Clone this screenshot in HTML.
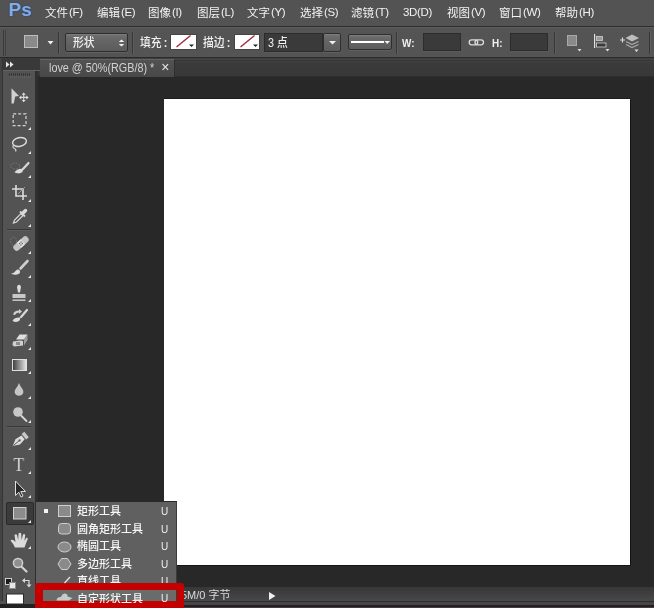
<!DOCTYPE html>
<html lang="zh-CN">
<head>
<meta charset="utf-8">
<title>Photoshop</title>
<style>
html,body{margin:0;padding:0;}
body{width:654px;height:608px;overflow:hidden;background:#282828;position:relative;
 font-family:"Liberation Sans","Noto Sans CJK SC",sans-serif;font-size:12px;color:#e4e4e4;}
div,span{position:absolute;box-sizing:border-box;}
#menubar,#optbar,#tabbar,#status,#flyout,#ttool{will-change:transform;}
svg{position:absolute;overflow:visible;left:0;top:0;filter:blur(0.35px);z-index:6;}
/* menu bar */
#menubar{left:0;top:0;width:654px;height:27px;background:#535353;border-bottom:1px solid #302e2c;}
#menubar span{top:3.5px;height:18px;line-height:18px;white-space:nowrap;font-size:11.5px;color:#f2f2f2;}
#menubar b{font-weight:normal;font-size:11.5px;letter-spacing:-0.35px;position:relative;top:-1px;margin-left:1px;}
#menubar #ps{left:8px;top:-1px;font-weight:bold;font-size:19px;color:#86abe3;line-height:22px;height:22px;letter-spacing:0px;text-shadow:0 0 1.5px #23458c,0 0 1px #23458c;left:8.5px;top:-1.5px;}
/* option bar */
#optbar{left:0;top:27px;width:654px;height:31px;background:#545454;border-top:1px solid #5c5c5c;border-bottom:1px solid #2b2b2b;}
#optbar span.t{top:5.5px;height:18px;line-height:18px;white-space:nowrap;font-size:12px;color:#f0f0f0;font-weight:500;transform:scaleX(0.9);transform-origin:0 50%;}
#optbar span.t b{font-weight:bold;margin-left:2.5px;}
.sep{top:4px;width:2px;height:22px;border-left:1px solid #363636;border-right:1px solid #5e5e5e;}
.dd{background:linear-gradient(#727272,#686868 25%,#5b5b5b);border:1px solid #2e2e2e;border-radius:2px;box-shadow:0 1px 0 #606060, inset 0 1px 0 #7c7c7c;}
.inp{background:#3a3a3a;border:1px solid #2c2c2c;box-shadow:0 1px 0 #5a5a5a;}
.sw{background:#fdfdfd;box-shadow:0 0 0 1px #444;}
/* tab bar */
#tabbar{left:38px;top:58px;width:616px;height:18.5px;background:linear-gradient(#323232 0,#444 0.7px,#454545 2px,#363636 2.5px,#414141 3.5px,#3b3b3b 4.5px,#383838 17.5px,#2e2e2e 18.5px);}
#tab{left:2px;top:1px;width:135px;height:17.5px;background:linear-gradient(#525252,#484848);border-top:1px solid #626262;border-right:1px solid #2e2e2e;}
#tab span{left:9px;top:0px;line-height:17px;font-size:12px;white-space:nowrap;color:#d2d2d2;transform:scaleX(0.9);transform-origin:0 50%;}
#tab #tclose{left:121.2px;top:-1.5px;font-size:14px;line-height:17px;transform:none;color:#e6e6e6;}
/* tools */
#tools{left:0;top:58px;width:38px;height:550px;background:#535353;border-left:2px solid #434343;border-right:3px solid #2f2f2f;box-shadow:inset 1px 0 0 #353535;}
#toolhead{left:1px;top:0px;width:37px;height:11.5px;background:#393939;z-index:3;box-shadow:0 1px 0 #616161;}
.tsep{left:5px;width:24px;height:2px;border-top:1px solid #383838;border-bottom:1px solid #5c5c5c;}
#selbtn{left:4px;top:444px;width:28px;height:23px;background:#3b3b3b;border:1px solid #2a2a2a;border-radius:2px;}
/* doc */
#doc{left:164px;top:99px;width:465.5px;height:466px;background:#fff;box-shadow:1px 1px 0 #141414, 0 -1px 0 #1c1c1c;}
#status{left:38px;top:587px;width:616px;height:14px;background:linear-gradient(#373737,#484848);}
#status span{left:143px;top:0px;line-height:17px;font-size:11px;white-space:nowrap;color:#dcdcdc;}
#bottom{left:0;top:601px;width:654px;height:7px;background:linear-gradient(#2c2c2c 0,#2c2c2c 1.5px,#48454a 1.5px,#48454a 4.5px,#241e21 4.5px,#241e21 6px,#463c40 6px);}
#bottoml{left:0;top:601px;width:36px;height:7px;background:linear-gradient(#535353 0,#535353 3px,#222 3.5px);}
/* flyout */
#flyout{left:36px;top:501px;width:141px;height:107px;background:#606060;border:1px solid #3a3a3a;border-top-color:#2a2a2a;border-left:none;overflow:hidden;}
#flyout2 span.u{left:123px;}
#flyout2{left:38px;top:589.7px;width:139px;height:12.6px;overflow:hidden;will-change:transform;}
#flyout span,#flyout2 span{white-space:nowrap;font-size:11px;line-height:17px;height:17px;color:#f6f6f6;font-weight:500;}
#flyout span.n{left:41px;}
#flyout2 span.n{left:39px;}
#flyout span.u{left:125px;}
#flyout span.u,#flyout2 span.u{font-size:10px;font-weight:normal;color:#efefef;}
#hl{left:0;top:86px;width:141px;height:20px;background:#6a6c6b;}
#red{left:34.7px;top:582.5px;width:148.9px;height:30.5px;border-style:solid;border-color:#c40000;border-width:7.7px 7.5px 12px 8px;border-radius:3px;}
</style>
</head>
<body>
<div id="menubar">
 <span id="ps">Ps</span>
 <span style="left:45px">文件<b>(F)</b></span>
 <span style="left:97px">编辑<b>(E)</b></span>
 <span style="left:148px">图像<b>(I)</b></span>
 <span style="left:197px">图层<b>(L)</b></span>
 <span style="left:247px">文字<b>(Y)</b></span>
 <span style="left:300px">选择<b>(S)</b></span>
 <span style="left:351px">滤镜<b>(T)</b></span>
 <span style="left:402px"><b>3D(D)</b></span>
 <span style="left:447px">视图<b>(V)</b></span>
 <span style="left:499px">窗口<b>(W)</b></span>
 <span style="left:555px">帮助<b>(H)</b></span>
</div>
<div id="optbar">
 <div class="sep" style="left:58px"></div>
 <div class="dd" style="left:65px;top:4.5px;width:63px;height:19px"></div>
 <span class="t" style="left:72.5px">形状</span>
 <div class="sep" style="left:132px"></div>
 <span class="t" style="left:139.5px">填充<b>:</b></span>
 <div class="sw" style="left:171px;top:6.500px;width:24.500px;height:14.500px"></div>
 <span class="t" style="left:202.5px">描边<b>:</b></span>
 <div class="sw" style="left:235px;top:6.500px;width:24px;height:14.500px"></div>
 <div class="inp" style="left:264px;top:5px;width:59px;height:19px"></div>
 <span class="t" style="left:267.5px">3 点</span>
 <div class="dd" style="left:323px;top:5px;width:18px;height:19px"></div>
 <div class="dd" style="left:348px;top:6px;width:44px;height:16px"></div>
 <div class="sep" style="left:396px"></div>
 <span class="t" style="left:402px;font-weight:bold;font-size:11px">W:</span>
 <div class="inp" style="left:423px;top:5px;width:38px;height:18px"></div>
 <span class="t" style="left:492px;font-weight:bold;font-size:11px">H:</span>
 <div class="inp" style="left:510px;top:5px;width:38px;height:18px"></div>
 <div class="sep" style="left:554px"></div>
 <div class="sep" style="left:649px"></div>
</div>
<span id="ttool" style="left:13px;top:455px;font-family:'Liberation Serif',serif;font-size:19px;line-height:19px;color:#d4d4d4;z-index:5;transform:scaleX(0.9);">T</span>
<div id="tabbar"><div id="tab"><span>love @ 50%(RGB/8) *</span><span id="tclose">×</span></div></div>
<div id="tools">
 <div id="toolhead"></div>
 <div class="tsep" style="top:171px"></div>
 <div class="tsep" style="top:368px"></div>
 <div id="selbtn"></div>
</div>
<div id="doc"></div>
<div id="status"><span>5M/0 字节</span></div>
<div id="bottom"></div><div id="bottoml"></div>
<div id="flyout">
 <span class="n" style="top:1px">矩形工具</span><span class="u" style="top:1px">U</span>
 <span class="n" style="top:18.5px">圆角矩形工具</span><span class="u" style="top:18.5px">U</span>
 <span class="n" style="top:36px">椭圆工具</span><span class="u" style="top:36px">U</span>
 <span class="n" style="top:53.5px">多边形工具</span><span class="u" style="top:53.5px">U</span>
 <span class="n" style="top:71px">直线工具</span><span class="u" style="top:71px">U</span>
 <div id="hl"></div>
</div>
<div id="red"></div>
<div id="flyout2"><span class="n" style="top:0.8px">自定形状工具</span><span class="u" style="top:0.2px">U</span></div>
<svg id="icons" width="654" height="608" viewBox="0 0 654 608">
<!-- ICONS -->
<defs>
 <linearGradient id="gr" x1="0" y1="0" x2="1" y2="0"><stop offset="0" stop-color="#3a3a3a"/><stop offset="1" stop-color="#e8e8e8"/></linearGradient>
</defs>
<!-- option bar -->
<g fill="#3a3a3a"><rect x="3" y="30" width="1" height="26" fill="#3a3a3a"/><rect x="5" y="30" width="1" height="26" fill="#404040"/></g>
<rect x="24.5" y="35.5" width="13" height="12" fill="#8a8a8a" stroke="#bdbdbd"/>
<path d="M47.5 41 L53.5 41 L50.5 44.5 Z" fill="#f0f0f0"/>
<path d="M118.8 42 L124.2 42 L121.5 39.5 Z M118.8 44 L124.2 44 L121.5 46.5 Z" fill="#f4f4f4"/>
<line x1="176.5" y1="47" x2="190.5" y2="35.5" stroke="#9a2c3c" stroke-width="1.4"/>
<path d="M189 44.500 L194 44.500 L191.5 47 Z" fill="#222"/>
<line x1="240.5" y1="47" x2="254.5" y2="35.5" stroke="#9a2c3c" stroke-width="1.4"/>
<path d="M253 44.500 L258 44.500 L255.5 47 Z" fill="#222"/>
<path d="M329 41 L336 41 L332.5 44.5 Z" fill="#f0f0f0"/>
<rect x="351" y="41" width="33" height="2" fill="#fff"/>
<path d="M384.5 41 L390 41 L387.2 44 Z" fill="#f0f0f0"/>
<g fill="none" stroke="#dcdcdc" stroke-width="1.3"><rect x="469.2" y="39.8" width="8.5" height="5" rx="2.5"/><rect x="475" y="39.8" width="8.5" height="5" rx="2.5"/></g>
<rect x="567.5" y="35.5" width="9" height="10" fill="#8a8a8a" stroke="#a8a8a8"/>
<path d="M577.5 49 L581.5 49 L579.5 51.5 Z" fill="#e0e0e0"/>
<g><rect x="594" y="34" width="1.2" height="14" fill="#e0e0e0"/><rect x="596.5" y="36.5" width="6" height="4" fill="#9a9a9a" stroke="#d0d0d0" stroke-width="0.8"/><rect x="596.5" y="43" width="9.5" height="4" fill="#3a3a3a" stroke="#d0d0d0" stroke-width="0.8"/><path d="M605.5 49 L609.5 49 L607.5 51.5 Z" fill="#e0e0e0"/></g>
<g><path d="M620 40 h5 M622.5 37.5 v5" stroke="#d8d8d8" stroke-width="1.2"/><path d="M632 34.5 L639 38 L632 41.500 L625.500 38 Z" fill="#bdbdbd"/><path d="M626 41.500 L632 44.500 L638.500 41.500 M626 44.500 L632 47.500 L638.500 44.500" fill="none" stroke="#a8a8a8" stroke-width="1.3"/><path d="M634.5 49.500 L638.5 49.500 L636.500 52 Z" fill="#e0e0e0"/></g>
<!-- tab close -->
<!-- toolbar header -->
<path d="M6 61.500 L9.500 64.500 L6 67.500 Z M10 61.500 L13.500 64.500 L10 67.500 Z" fill="#e8e8e8"/>
<line x1="9" y1="74.500" x2="31" y2="74.500" stroke="#333" stroke-width="2.500" stroke-dasharray="1 1"/>
<line x1="10" y1="77" x2="32" y2="77" stroke="#6a6a6a" stroke-width="1" stroke-dasharray="1 1"/>
<!-- corner triangles -->
<g>
<path d="M31 127 v3 h-3 Z" fill="#e8e8e8"/><path d="M31 151 v3 h-3 Z" fill="#e8e8e8"/><path d="M31 175 v3 h-3 Z" fill="#e8e8e8"/><path d="M31 199 v3 h-3 Z" fill="#e8e8e8"/><path d="M31 224 v3 h-3 Z" fill="#e8e8e8"/>
<path d="M31 251 v3 h-3 Z" fill="#e8e8e8"/><path d="M31 275 v3 h-3 Z" fill="#e8e8e8"/><path d="M31 299 v3 h-3 Z" fill="#e8e8e8"/><path d="M31 323 v3 h-3 Z" fill="#e8e8e8"/>
<path d="M31 347 v3 h-3 Z" fill="#e8e8e8"/><path d="M31 371 v3 h-3 Z" fill="#e8e8e8"/><path d="M31 396 v3 h-3 Z" fill="#e8e8e8"/><path d="M31 420 v3 h-3 Z" fill="#e8e8e8"/>
<path d="M31 447 v3 h-3 Z" fill="#e8e8e8"/><path d="M31 471 v3 h-3 Z" fill="#e8e8e8"/><path d="M31 495 v3 h-3 Z" fill="#e8e8e8"/><path d="M31 520 v3 h-3 Z" fill="#e8e8e8"/><path d="M31 546 v3 h-3 Z" fill="#e8e8e8"/>
</g>
<!-- move tool -->
<path d="M11.500 88.300 L19 96 L15.200 96.500 L13.800 103.500 L11.500 103.500 Z" fill="#d0d0d0"/>
<path d="M20.500 97.400 h7 M23.700 94 v7" stroke="#d8d8d8" stroke-width="1.100" fill="none"/>
<path d="M23.700 92.500 l-2 2.300 h4 Z M23.700 102.300 l-2 -2.300 h4 Z M19 97.400 l2.300 -2 v4 Z M28.600 97.400 l-2.300 -2 v4 Z" fill="#e0e0e0"/>
<!-- marquee -->
<rect x="13.200" y="113.800" width="12.800" height="11.800" fill="none" stroke="#d4d4d4" stroke-width="1.2" stroke-dasharray="3 2"/>
<!-- lasso -->
<ellipse cx="19.500" cy="142" rx="7" ry="4.300" fill="none" stroke="#dcdcdc" stroke-width="1.400" transform="rotate(-12 19.500 142)"/>
<path d="M13.500 145 q-1.500 2.500 1 3.500 q2 1 1 3" fill="none" stroke="#cfcfcf" stroke-width="1.300"/>
<!-- quick select -->
<path d="M28.500 163 L23 169" stroke="#d8d8d8" stroke-width="2.200" stroke-linecap="round"/>
<path d="M14.500 172.500 q3 -4.500 8.500 -3.500 q0.500 4 -4.500 4.500 Z" fill="#dcdcdc"/>
<ellipse cx="15" cy="166" rx="4.500" ry="3" fill="none" stroke="#777" stroke-width="1" stroke-dasharray="1.500 1.500"/>
<!-- crop -->
<path d="M16 185 v11 h11 M12 189 h11 v11" fill="none" stroke="#dcdcdc" stroke-width="1.600"/>
<path d="M18 194 L25 187" stroke="#9a9a9a" stroke-width="1"/>
<!-- eyedropper -->
<path d="M13.500 223 L14.500 220 L21 213.500 L23 215.500 L16.500 222 Z" fill="none" stroke="#d8d8d8" stroke-width="1.200"/>
<path d="M20 211.500 L25 216.500" stroke="#d0d0d0" stroke-width="2"/>
<path d="M22.500 213.500 L25.500 210.500" stroke="#d8d8d8" stroke-width="3.500" stroke-linecap="round"/>
<!-- heal (bandage) -->
<g transform="rotate(-42 21 243.500)"><rect x="12" y="240.200" width="18" height="6.600" rx="3" fill="#c4c4c4"/><rect x="18.500" y="240.200" width="5" height="6.600" fill="#e6e6e6"/><circle cx="20" cy="242.500" r="0.700" fill="#555"/><circle cx="22" cy="244.500" r="0.700" fill="#555"/><circle cx="22" cy="242.500" r="0.700" fill="#555"/><circle cx="20" cy="244.500" r="0.700" fill="#555"/></g>
<ellipse cx="13.500" cy="241" rx="3" ry="4" fill="none" stroke="#7a7a7a" stroke-width="1" stroke-dasharray="1.500 1.500"/>
<!-- brush -->
<path d="M27.500 261 L20.500 268.500" stroke="#cfcfcf" stroke-width="2.600" stroke-linecap="round"/>
<path d="M11 273.500 q3.500 -0.500 5 -3 q2 -2 4 0.500 q0.500 3 -3 3.500 q-3 0.800 -6 -1 Z" fill="#dcdcdc"/>
<!-- stamp -->
<path d="M17.500 285.500 q1.500 -1.500 3 0 q1 1.500 0 4 l-0.500 3 h-2 l-0.500 -3 q-1 -2.500 0 -4 Z" fill="#dcdcdc"/>
<rect x="12.500" y="294" width="13" height="4" fill="#c8c8c8"/>
<rect x="12.500" y="299.500" width="13" height="1.300" fill="#dcdcdc"/>
<!-- history brush -->
<path d="M27 310 L21 317" stroke="#d8d8d8" stroke-width="2.200" stroke-linecap="round"/>
<path d="M12.500 320.500 q2.500 -3.500 7.500 -3 q1 3.500 -3.500 4.500 q-2.500 0.300 -4 -1.500 Z" fill="#dcdcdc"/>
<path d="M13 314.500 q1 -4 6 -4 l0 -1.500 l3 2.500 l-3 2.500 l0 -1.500 q-3 0 -4 2.500 Z" fill="#cfcfcf"/>
<!-- eraser -->
<path d="M19.500 334.500 L27.500 334.500 L24 339.500 L16 339.500 Z" fill="#e0e0e0"/>
<path d="M24 339.500 L27.500 334.500 L27.500 340 L24 345.500 Z" fill="#9c9c9c"/>
<path d="M13 341.500 L20 340.500 L23 341 L23 345.500 L14 346.500 L12.500 345 Z" fill="#d0d0d0"/>
<rect x="16" y="342" width="4" height="3" fill="#8c8c8c"/>
<!-- gradient -->
<rect x="12.500" y="359.500" width="14" height="11" fill="url(#gr)" stroke="#e0e0e0" stroke-width="1"/>
<!-- blur drop -->
<path d="M19 383 q1 3 3.500 6 q2 3.500 -0.500 5.800 q-3 2 -6 0 q-2.500 -2.300 -0.500 -5.800 q2.500 -3 3.500 -6 Z" fill="#c6c6c6"/>
<!-- dodge -->
<circle cx="18" cy="412" r="4.800" fill="#c8c8c8"/>
<path d="M21.500 416 L26.500 421" stroke="#d8d8d8" stroke-width="1.800" stroke-linecap="round"/>
<!-- pen -->
<g transform="rotate(-40 20 440)"><path d="M10.500 440 L17 436.500 L24 437.500 L24 442.500 L17 443.500 Z" fill="#dcdcdc"/><rect x="25" y="436.500" width="3.600" height="7" fill="#c8c8c8"/><path d="M11.500 440 H19" stroke="#555" stroke-width="0.900"/><circle cx="19.500" cy="440" r="1.100" fill="#555"/></g>
<!-- path select arrow -->
<path d="M15.500 481 L15.500 495.500 L18.800 492.200 L21 497 L23 496 L20.800 491.500 L25.500 491.500 Z" fill="#2a2a2a" stroke="#dedede" stroke-width="1"/>
<!-- rectangle tool -->
<rect x="13.500" y="507.500" width="12.500" height="11.500" fill="#8c8c8c" stroke="#d0d0d0" stroke-width="1"/>
<!-- hand -->
<path d="M15 547.500 Q13.500 544 10.500 540.500 Q12 539 14.500 541 L15.500 542 L14.500 535 Q16 533.500 17 535 L18.200 540 L18.500 533.500 Q20 532 21.200 533.500 L21.500 540 L23 534.500 Q24.500 533.500 25.200 535 L24.500 541 L26.500 537.500 Q28 537.500 27.800 539 Q26 543 24.500 547.500 Z" fill="#dadada"/>
<!-- zoom -->
<circle cx="18" cy="563" r="4.600" fill="#8f8f8f" stroke="#d0d0d0" stroke-width="1.500"/>
<path d="M21.800 567 L26.500 571.500" stroke="#d4d4d4" stroke-width="2.200" stroke-linecap="round"/>
<!-- color controls -->
<rect x="5.500" y="578.500" width="6" height="6" fill="#1a1a1a" stroke="#cfcfcf" stroke-width="1"/>
<rect x="9.500" y="582.500" width="6" height="6" fill="#e8e8e8" stroke="#8a8a8a" stroke-width="1"/>
<path d="M24 580.500 h5 v5" fill="none" stroke="#d8d8d8" stroke-width="1.200"/>
<path d="M22 580.500 l3 -2.500 v5 Z M29 587.500 l-2.500 -3 h5 Z" fill="#d8d8d8"/>
<rect x="6.500" y="594" width="17" height="10" fill="#fff" stroke="#2a2a2a" stroke-width="1"/>
<!-- status arrow -->
<path d="M269 592 L275.500 596 L269 600 Z" fill="#f0f0f0"/>
<!-- flyout icons -->
<rect x="44" y="509" width="4" height="4" fill="#f4f4f4"/>
<rect x="58.500" y="505.500" width="12" height="11" fill="#8a8a8a" stroke="#cfcfcf"/>
<rect x="58.500" y="523.500" width="12" height="10.500" rx="3" fill="#8a8a8a" stroke="#cfcfcf"/>
<ellipse cx="64.500" cy="547" rx="6.500" ry="5" fill="#8a8a8a" stroke="#cfcfcf"/>
<path d="M58 564 L61.500 558.500 L67.500 558.500 L71 564 L67.500 569.500 L61.500 569.500 Z" fill="#8a8a8a" stroke="#cfcfcf"/>
<path d="M64.500 583 L70 577" stroke="#e8e8e8" stroke-width="1.200"/>
<path d="M56.500 600.500 q0.500 -4 4.500 -3.500 q1 -3.500 4 -3.500 q3 0.500 2.500 3 l5 1.500 l-3.500 2.500 Z" fill="#c4ccc8"/>
</svg>
</body>
</html>
